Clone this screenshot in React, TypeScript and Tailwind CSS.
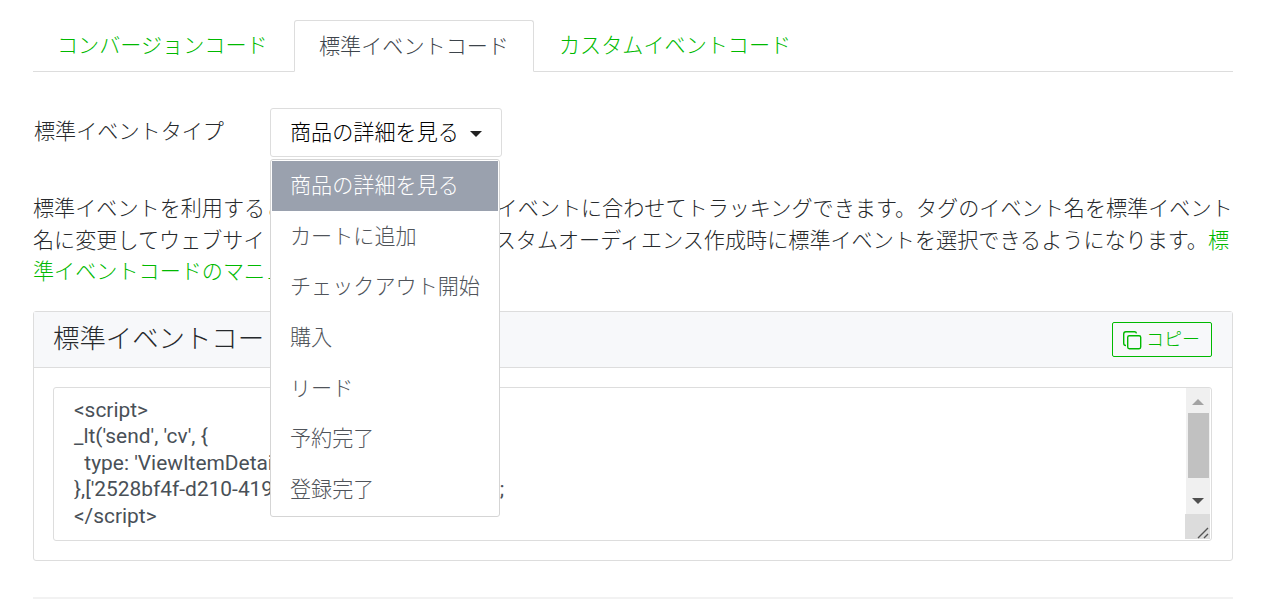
const items = ['商品の詳細を見る', 'カートに追加', 'チェックアウト開始', '購入', 'リード', '予約完了', '登録完了'];
function CopyIcon() {
  return (
    <svg width="20" height="20" viewBox="0 0 20 20" fill="none" stroke="currentColor" strokeWidth="1.4" className="shrink-0 -ml-[1px]">
      <path d="M4 15.5c-1.4 0-2.3-.9-2.3-2.2V4c0-1.3.9-2.2 2.2-2.2h8.6c1 0 1.8.6 2 1.6" />
      <rect x="5.7" y="5.7" width="13" height="13" rx="1.6" />
    </svg>
  );
}
function Dropdown() {
  return (
    <div className="absolute left-0 top-[51px] w-[230px] h-[358px] z-10 bg-white border border-[#d5d5d5] rounded-[3px] pt-[0.5px] px-[1px]">
      {items.map((t, i) => (
        <div key={t} className={`h-[50.65px] pl-[18px] flex items-center text-[21.12px] whitespace-nowrap ${i === 0 ? 'bg-[#9aa1ae] text-white' : 'text-[#50545a]'}`}>{t}</div>
      ))}
    </div>
  );
}
function FakeScrollbar() {
  return (
    <div className="w-[26px] shrink-0 flex flex-col items-stretch ml-auto pr-[1px] pb-[1px]">
      <div className="flex-1 w-[24px] ml-[1px] bg-[#f0f0f0] flex flex-col items-center pt-[11px]">
        <div className="w-0 h-0 border-x-[6px] border-x-transparent border-b-[6px] border-b-[#a3a3a3]" />
        <div className="w-[21px] h-[65px] mt-[8px] bg-[#c1c1c1]" />
        <div className="w-0 h-0 border-x-[6px] border-x-transparent border-t-[6px] border-t-[#505050] mt-[20px]" />
      </div>
      <div className="h-[25px] bg-[#dcdcdc] flex items-end justify-end">
        <svg width="14" height="14" viewBox="0 0 14 14" stroke="#555" strokeWidth="1.4" fill="none"><path d="M2 13 12 3M8 13l4-4" /></svg>
      </div>
    </div>
  );
}
export default function App() {
  return (
    <div className="w-[1262px] h-[612px] overflow-hidden bg-white px-[33px] pt-[20px] text-[21.12px] leading-[31.68px] text-[#26292c] font-light" style={{ fontFamily: 'Roboto, "Noto Sans CJK JP", sans-serif' }}>
      <div className="flex border-b border-[#dddddd] h-[52px] w-[1200px]">
        <div className="w-[261px] h-[52px] pl-[24px] pt-[10px] text-[#00b900]">コンバージョンコード</div>
        <div className="w-[240px] h-[52px] pl-[24px] pt-[10px] bg-white border border-[#dddddd] border-b-white rounded-t-[3px] text-[#3d444b]">標準イベントコード</div>
        <div className="pl-[25px] pt-[10px] text-[#00b900]">カスタムイベントコード</div>
      </div>
      <div className="flex items-start mt-[36px] h-[49px]">
        <div className="w-[237px] pl-[1px] pt-[8px]">標準イベントタイプ</div>
        <div className="relative">
          <div className="w-[232px] h-[49px] border border-[#dddddd] rounded-[3px] flex items-center pl-[19px] text-black">
            商品の詳細を見る
            <span className="ml-[11px] mt-[3px] w-0 h-0 border-x-[6px] border-x-transparent border-t-[6px] border-t-[#222]" />
          </div>
          <Dropdown />
        </div>
      </div>
      <p className="mt-[36px] w-[1210px] h-[95px] [word-break:break-all]">標準イベントを利用すると、ウェブサイトの各種イベントに合わせてトラッキングできます。タグのイベント名を標準イベント名に変更してウェブサイトに設置しておくと、カスタムオーディエンス作成時に標準イベントを選択できるようになります。<span className="text-[#00b900]">標準イベントコードのマニュアル</span></p>
      <div className="mt-[23px] w-[1200px] h-[250px] border border-[#dddddd] rounded-[3px] flex flex-col">
        <div className="h-[56px] shrink-0 bg-[#f7f8fa] border-b border-[#dddddd] flex items-center justify-between pl-[19px] pr-[20px]">
          <div className="text-[26.4px] text-[#26292c]">標準イベントコード</div>
          <div className="w-[100px] h-[35px] border border-[#00b900] rounded-[2px] text-[#00b900] text-[18px] flex items-center pl-[10px] gap-[4px]">
            <CopyIcon />コピー
          </div>
        </div>
        <div className="pl-[19px] pr-[20px] py-[19px] flex-1">
          <div className="h-[154px] border border-[#dddddd] rounded-[3px] flex bg-white">
            <pre className="pl-[20px] pt-[9px] text-[20.9px] leading-[26.4px] font-normal text-[#495057] flex-1" style={{ fontFamily: 'Roboto, "Noto Sans CJK JP", sans-serif' }}>{`<script>
_lt('send', 'cv', {
  type: 'ViewItemDetail'
},['2528bf4f-d210-4198-b0d4-c4d1e2f3a4b5' ]);
</script>`}</pre>
            <FakeScrollbar />
          </div>
        </div>
      </div>
      <div className="mt-[36px] w-[1200px] border-t-2 border-[#f2f2f2]" />
    </div>
  );
}
